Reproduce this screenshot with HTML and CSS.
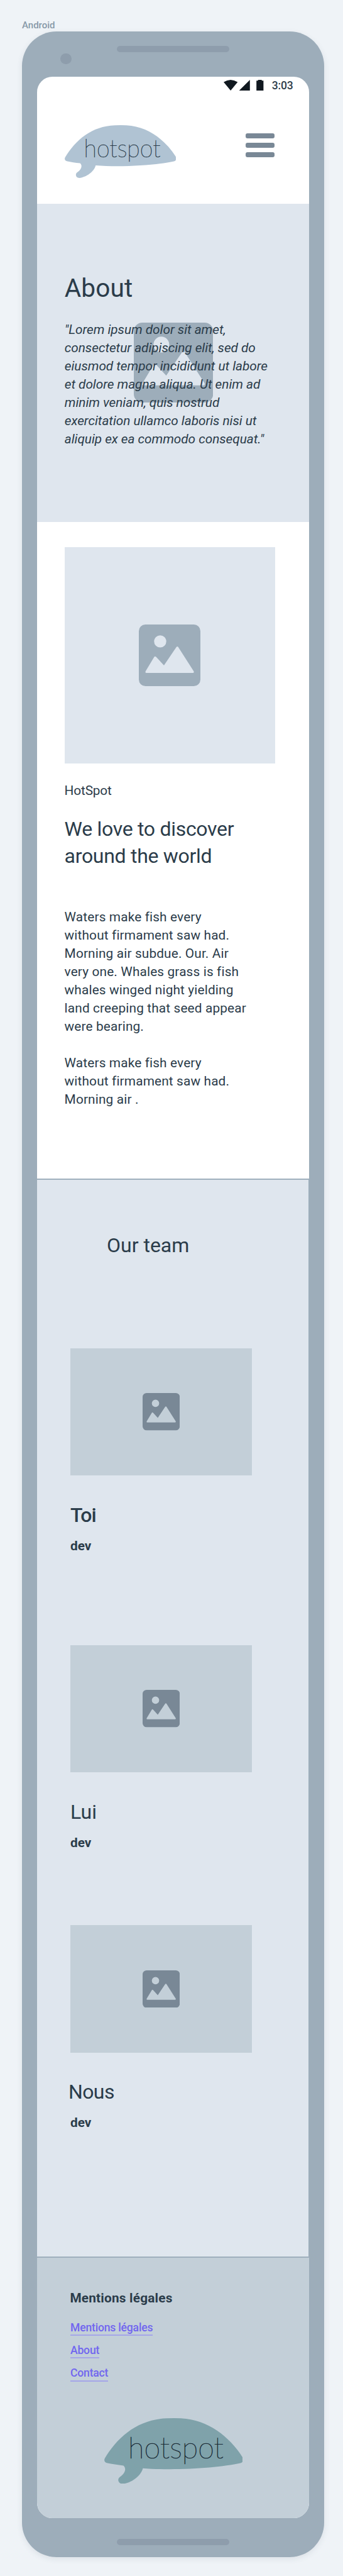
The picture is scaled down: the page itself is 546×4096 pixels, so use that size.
FILE: index.html
```html
<!DOCTYPE html>
<html lang="fr">
<head>
<meta charset="utf-8">
<title>HotSpot – About</title>
<link rel="stylesheet" href="styles.css">
</head>
<body>
<svg class="defs" aria-hidden="true">
  <symbol id="picture" viewBox="0 0 98 98" preserveAspectRatio="none">
    <path fill="currentColor" fill-rule="evenodd" d="M10.5 0h77A10.5 10.5 0 0 1 98 10.5v77A10.5 10.5 0 0 1 87.5 98h-77A10.5 10.5 0 0 1 0 87.5v-77A10.5 10.5 0 0 1 10.5 0zM34 17.200a9.700 9.700 0 1 0 0 19.400a9.700 9.700 0 1 0 0-19.400zM24.500 51.500L10.800 74.300Q9.800 77 12 77H86Q88.300 77 87.300 74.300L62.800 36Q61.200 34 59.700 36L40 65L27.500 51.500Q25.900 50 24.500 51.500z"/>
  </symbol>
  <symbol id="bubble" viewBox="0 0 177.300 84">
    <path fill="currentColor" d="M80 .3Q89 -.3 98 .3C133 2 160 24 176.500 49.500Q177.300 51 177.300 53.500Q177.300 56.600 174 57.500C147 63.400 92 67.400 49.300 64C47 74 34 83 23.500 83.900C17.500 84 16.200 77.500 20 75C27 70.500 28.500 64 24.500 60.600C17 59.800 10 58.700 3.200 57.300Q-1 56 .5 51.600C17 24 43 1.500 80 .3z"/>
  </symbol>
</svg>

<div class="device-label">Android</div>
<div class="phone">
  <div class="bezel-top"><i class="camera"></i><i class="speaker"></i></div>
  <div class="screen">
    <div class="status">
      <svg class="status-icons" viewBox="0 0 63.400 17"><path fill="#10181f" d="M0 3.600Q11.100 -3.600 22.300 3.600L11.150 17zM24.700 17L41.800 0V17zM52.200 1.200h2.500V0h6v1.200h2.700V17H52.200z"/></svg>
      <span class="clock">3:03</span>
    </div>
    <header class="header">
      <svg class="logo" viewBox="0 0 177.300 84"><use href="#bubble" width="177.300" height="84"/><text class="logo-text" x="30.500" y="51.500" textLength="122" lengthAdjust="spacingAndGlyphs">hotspot</text></svg>
      <div class="burger"><i></i><i></i><i></i></div>
    </header>

    <section class="hero">
      <svg class="hero-picture"><use href="#picture"/></svg>
      <h1>About</h1>
      <p>"Lorem ipsum dolor sit amet,<br>consectetur adipiscing elit, sed do<br>eiusmod tempor incididunt ut labore<br>et dolore magna aliqua. Ut enim ad<br>minim veniam, quis nostrud<br>exercitation ullamco laboris nisi ut<br>aliquip ex ea commodo consequat."</p>
    </section>

    <section class="story">
      <div class="story-picture"><svg><use href="#picture"/></svg></div>
      <div class="brand">HotSpot</div>
      <h2>We love to discover<br>around the world</h2>
      <p>Waters make fish every<br>without firmament saw had.<br>Morning air subdue. Our. Air<br>very one. Whales grass is fish<br>whales winged night yielding<br>land creeping that seed appear<br>were bearing.</p>
      <p>Waters make fish every<br>without firmament saw had.<br>Morning air .</p>
    </section>

    <section class="team">
      <h2>Our team</h2>
      <article class="member first">
        <div class="portrait"><svg><use href="#picture"/></svg></div>
        <h3>Toi</h3>
        <div class="role">dev</div>
      </article>
      <article class="member">
        <div class="portrait"><svg><use href="#picture"/></svg></div>
        <h3>Lui</h3>
        <div class="role">dev</div>
      </article>
      <article class="member last">
        <div class="portrait"><svg><use href="#picture"/></svg></div>
        <h3>Nous</h3>
        <div class="role">dev</div>
      </article>
    </section>

    <footer class="footer">
      <h4>Mentions légales</h4>
      <nav><a>Mentions légales</a><a>About</a><a>Contact</a></nav>
      <svg class="logo" viewBox="0 0 177.300 84"><use href="#bubble" width="177.300" height="84"/><text class="logo-text" x="30.500" y="51.500" textLength="122" lengthAdjust="spacingAndGlyphs">hotspot</text></svg>
    </footer>
  </div>
  <div class="bezel-bottom"><i class="speaker"></i></div>
</div>
</body>
</html>
```

FILE: styles.css
```css
* { box-sizing: border-box; margin: 0; padding: 0; }

body {
  width: 546px;
  height: 4096px;
  overflow: hidden;
  background: #eff3f7;
  color: #2b3c4a;
  font: 400 20.8px/28.9px Roboto, "Liberation Sans", sans-serif;
}

svg, i { display: block; }
.defs { position: absolute; width: 0; height: 0; }

.device-label {
  height: 49.5px;
  padding: 31.2px 0 0 35px;
  font-size: 15px;
  font-weight: 500;
  line-height: 18px;
  color: #8799a8;
}

.phone {
  width: 481px;
  height: 4016.5px;
  margin-left: 35.2px;
  padding: 0 24px;
  border-radius: 55px;
  background: #9dadba;
  box-shadow: 0 3px 10px rgba(60, 80, 100, .11);
}

.bezel-top { display: flex; align-items: flex-start; height: 72.2px; }
.camera {
  width: 17.3px;
  height: 17.3px;
  margin: 35.5px 0 0 37.3px;
  border-radius: 50%;
  background: #8e9dac;
}
.speaker { width: 178.6px; height: 10px; border-radius: 5px; background: #8e9dac; }
.bezel-top .speaker { margin: 23.7px 0 0 72.5px; }
.bezel-bottom { padding: 33.4px 0 0 127.2px; }

.screen {
  height: 3882.3px;
  overflow: hidden;
  border-radius: 24.5px;
  background: #fff;
}

.status {
  display: flex;
  align-items: flex-start;
  justify-content: flex-end;
  height: 30px;
  padding-right: 25.7px;
}
.status-icons { width: 63.4px; height: 17px; margin: 5.8px 13px 0 0; }
.clock {
  padding-top: 4.8px;
  font-size: 17.5px;
  font-weight: 500;
  line-height: 20px;
  letter-spacing: -.15px;
}

.header {
  display: flex;
  align-items: flex-start;
  justify-content: space-between;
  height: 172.3px;
  padding: 47.1px 55.3px 0 44px;
}
.header .logo { width: 177.3px; height: 84px; color: #b0c3d3; }
.logo-text {
  font: 100 39px Lato, sans-serif;
  fill: #2b3c4a;
  stroke: #2b3c4a;
  stroke-width: .5px;
}
.burger { display: grid; gap: 7.5px; width: 45.7px; padding-top: 13.2px; }
.burger i { height: 7.7px; border-radius: 3px; background: #798896; }

.hero {
  position: relative;
  height: 505.8px;
  padding: 110.1px 0 0 43.6px;
  background: #dfe6ee;
}
.hero-picture {
  position: absolute;
  top: 189.5px;
  left: 153.4px;
  width: 126.4px;
  height: 127px;
  color: #9dadba;
}
h1 {
  position: relative;
  font-size: 40.6px;
  font-weight: 400;
  line-height: 48px;
  letter-spacing: .1px;
}
.hero p { position: relative; margin-top: 28.4px; font-style: italic; letter-spacing: -.04px; }

.story { height: 1044.1px; padding: 40.6px 0 0 43.4px; letter-spacing: .15px; }
.story-picture {
  display: grid;
  place-items: center;
  width: 335.4px;
  height: 344px;
  margin-bottom: 28.4px;
  background: #dfe6ee;
  color: #9dadba;
}
.story-picture svg { width: 98px; height: 98px; }
.brand { letter-spacing: -.15px; }

h2, h3 { font-size: 32px; font-weight: 400; line-height: 40px; }
.story h2 { margin: 25px 0 61px; line-height: 43.4px; letter-spacing: -.3px; }
.story p + p { margin-top: 28.9px; }

.team {
  height: 1714.2px;
  padding: 84.6px 0 0 52.8px;
  border-top: 2.5px solid #9fb0bd;
  border-right: 1px solid #9fb0bd;
  background: #dfe6ee;
}
.team h2 { margin: 0 0 143.1px 58px; }
.member { margin-bottom: 116.5px; }
.member.first { margin-bottom: 142.9px; }
.portrait {
  display: grid;
  place-items: center;
  width: 289.4px;
  height: 202.6px;
  margin-bottom: 42.6px;
  background: #c3cfd8;
  color: #798896;
}
.portrait svg { width: 59.2px; height: 59.4px; }
h3 { margin-bottom: 15px; }
.first h3 { font-weight: 500; letter-spacing: -1px; }
.last h3 { margin-left: -3px; letter-spacing: -.6px; }
.role { font-weight: 700; line-height: 28.9px; }

.footer {
  height: 415.9px;
  padding: 50.2px 0 0 52.2px;
  border-top: 2.4px solid #9fb0bd;
  background: #c3cfd8;
}
h4 { font-size: 20.8px; font-weight: 700; letter-spacing: .2px; }
nav { display: grid; justify-items: start; gap: 12.4px; margin: 21.5px 0 58.3px .6px; }
nav a {
  height: 23.7px;
  border-bottom: 2px solid #a5a6e8;
  color: #7166ef;
  font-size: 17.6px;
  font-weight: 500;
  line-height: 21px;
  letter-spacing: -.2px;
}
.footer .logo { width: 220.8px; height: 104.6px; margin-left: 54.2px; color: #7fa2aa; }
.footer .logo-text { fill: #1c2d38; stroke: #1c2d38; }
```
